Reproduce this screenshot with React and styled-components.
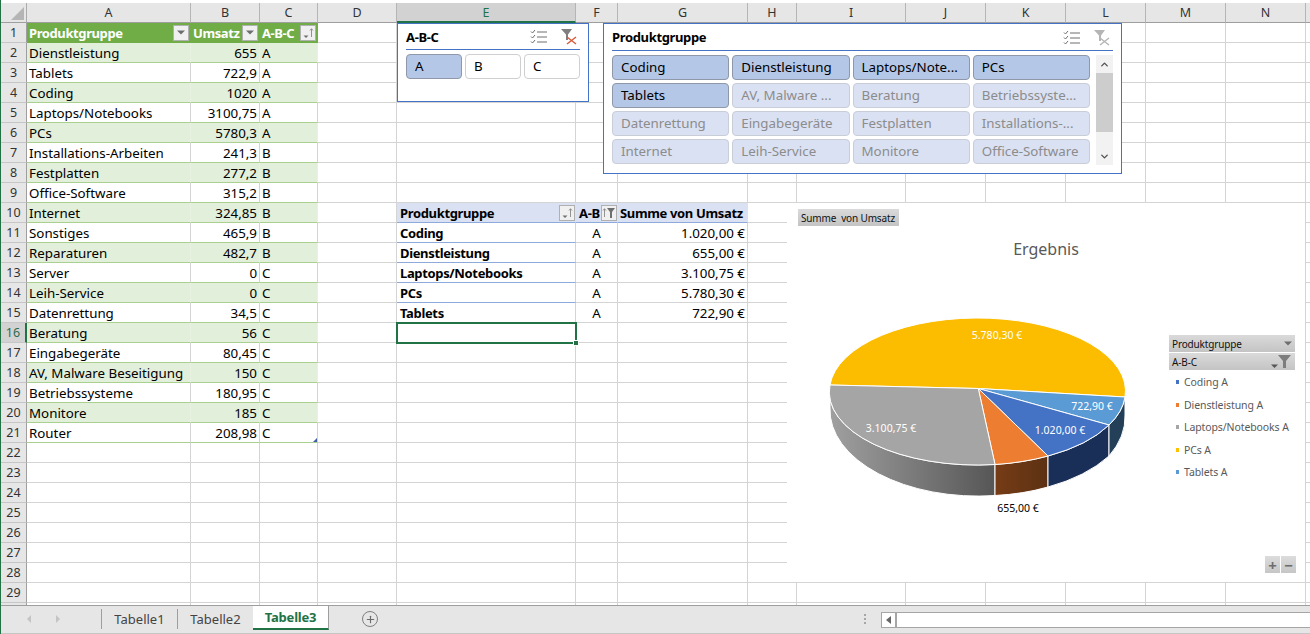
import React from "react";
import styled, { createGlobalStyle } from "styled-components";
import { ChevronUp, ChevronDown, Plus } from "lucide-react";

const GlobalStyle = createGlobalStyle`
  html, body { margin: 0; padding: 0; background: #fff; }
  body { font-family: "Noto Sans", "Open Sans", sans-serif; font-size: 13.33px; color: #000; }
  * { box-sizing: border-box; }
`;

const FONT = `"Noto Sans", "Open Sans", sans-serif`;
const GRID = "#d4d4d4";
const GREEN = "#217346";

const columns = [
  ["A", 164], ["B", 69], ["C", 58], ["D", 79], ["E", 179], ["F", 42], ["G", 130], ["H", 49],
  ["I", 109], ["J", 80], ["K", 80], ["L", 80], ["M", 80], ["N", 80], ["", 20],
];

const products = [
  ["Dienstleistung", "655", "A"], ["Tablets", "722,9", "A"], ["Coding", "1020", "A"],
  ["Laptops/Notebooks", "3100,75", "A"], ["PCs", "5780,3", "A"], ["Installations-Arbeiten", "241,3", "B"],
  ["Festplatten", "277,2", "B"], ["Office-Software", "315,2", "B"], ["Internet", "324,85", "B"],
  ["Sonstiges", "465,9", "B"], ["Reparaturen", "482,7", "B"], ["Server", "0", "C"],
  ["Leih-Service", "0", "C"], ["Datenrettung", "34,5", "C"], ["Beratung", "56", "C"],
  ["Eingabegeräte", "80,45", "C"], ["AV, Malware Beseitigung", "150", "C"], ["Betriebssysteme", "180,95", "C"],
  ["Monitore", "185", "C"], ["Router", "208,98", "C"],
];

const pivot = [
  ["Coding", "A", "1.020,00 €"], ["Dienstleistung", "A", "655,00 €"], ["Laptops/Notebooks", "A", "3.100,75 €"],
  ["PCs", "A", "5.780,30 €"], ["Tablets", "A", "722,90 €"],
];

const slicerItems = [
  ["Coding", 1], ["Dienstleistung", 1], ["Laptops/Note...", 1], ["PCs", 1],
  ["Tablets", 1], ["AV, Malware ...", 0], ["Beratung", 0], ["Betriebssyste...", 0],
  ["Datenrettung", 0], ["Eingabegeräte", 0], ["Festplatten", 0], ["Installations-...", 0],
  ["Internet", 0], ["Leih-Service", 0], ["Monitore", 0], ["Office-Software", 0],
];

const legend = [
  ["Coding A", "#4472c4"], ["Dienstleistung A", "#ed7d31"], ["Laptops/Notebooks A", "#a5a5a5"],
  ["PCs A", "#ffc000"], ["Tablets A", "#5b9bd5"],
];

const Workbook = styled.div`
  width: 1310px;
  height: 634px;
  overflow: hidden;
  padding-top: 3px;
  border-left: 1px solid ${GREEN};
  display: flex;
  flex-direction: column;
`;

const Sheet = styled.div`
  position: relative;
  height: 602px;
  overflow: hidden;
  display: grid;
  grid-template-columns: 26px ${columns.map((c) => c[1] + "px").join(" ")};
  grid-auto-rows: 20px;
`;

const Corner = styled.div`
  background: #e6e6e6;
  border-right: 1px solid #ababab;
  border-bottom: 1px solid #9e9e9e;
  display: flex;
  align-items: flex-end;
  justify-content: flex-end;
  padding: 0 2px 2px 0;
  &::after {
    content: "";
    border-style: solid;
    border-width: 0 0 13px 13px;
    border-color: transparent transparent #b5b5b5 transparent;
  }
`;

const ColHead = styled.div`
  background: ${(p) => (p.$active ? "#d2d2d2" : "#e6e6e6")};
  color: ${(p) => (p.$active ? GREEN : "#333")};
  border-right: 1px solid #b5b5b5;
  border-bottom: ${(p) => (p.$active ? `2px solid ${GREEN}` : "1px solid #9e9e9e")};
  font-size: 12.5px;
  display: flex;
  align-items: center;
  justify-content: center;
`;

const RowHead = styled.div`
  background: ${(p) => (p.$active ? "#d2d2d2" : "#e6e6e6")};
  color: ${(p) => (p.$active ? "#2f6b4d" : "#333")};
  border-right: ${(p) => (p.$active ? `2px solid ${GREEN}` : "1px solid #9e9e9e")};
  border-bottom: 1px solid #c6c6c6;
  font-size: 12.5px;
  display: flex;
  align-items: center;
  justify-content: center;
`;

const Cell = styled.div`
  position: relative;
  border-right: 1px solid ${GRID};
  border-bottom: 1px solid ${GRID};
  padding: 0 2px;
  font-size: 13.33px;
  white-space: nowrap;
  overflow: hidden;
  display: flex;
  align-items: center;
  justify-content: ${(p) => (p.$align === "right" ? "flex-end" : p.$align === "center" ? "center" : "flex-start")};
`;

const TableCell = styled(Cell)`
  background: ${(p) => (p.$band ? "#e2efda" : "#fff")};
  border-bottom-color: #a9d08e;
  border-right-color: ${(p) => (p.$band ? "#e8f2e1" : GRID)};
  overflow: visible;
`;

const TableHead = styled(Cell)`
  background: #70ad47;
  color: #fff;
  font-size: 13px;
  font-weight: 700;
  letter-spacing: -0.4px;
  border-right-color: #70ad47;
  border-bottom-color: #70ad47;
  padding: 0 1px 0 2px;
  gap: 2px;
  justify-content: space-between;
`;

const PivotHead = styled(Cell)`
  background: #d9e1f2;
  font-size: 13px;
  font-weight: 700;
  letter-spacing: -0.35px;
  border-right-color: #d9e1f2;
  border-bottom-color: #8ea9db;
  justify-content: space-between;
  padding: 0 0 0 ${(p) => p.$indent}px;
`;

const PivotLabel = styled(Cell)`
  font-size: 13px;
  font-weight: 700;
  letter-spacing: -0.35px;
  padding-left: 3px;
  border-bottom-color: #8ea9db;
`;

const ActiveCell = styled(Cell)`
  overflow: visible;
  border: none;
  outline: 2px solid ${GREEN};
  outline-offset: -1px;
  z-index: 2;
`;

const FillHandle = styled.span`
  position: absolute;
  right: -3px;
  bottom: -3px;
  width: 6px;
  height: 6px;
  background: ${GREEN};
  border: 1px solid #fff;
`;

const ResizeHandle = styled.span`
  position: absolute;
  right: 0;
  bottom: 0;
  border-style: solid;
  border-width: 0 0 4px 4px;
  border-color: transparent transparent #3f5ea8 transparent;
`;

const DropButton = styled.span`
  width: 16px;
  height: 16px;
  flex: none;
  background: #f0f0f0;
  border: 1px solid #b0b0b0;
  display: flex;
  align-items: center;
  justify-content: center;
`;

const Slicer = styled.div`
  position: absolute;
  z-index: 3;
  top: ${(p) => p.$top}px;
  left: ${(p) => p.$left}px;
  width: ${(p) => p.$width}px;
  height: ${(p) => p.$height}px;
  background: #fff;
  border: 1px solid #4472c4;
  padding: 0 8px;
`;

const SlicerHeader = styled.div`
  height: ${(p) => p.$height}px;
  border-bottom: 1px solid #4472c4;
  display: flex;
  align-items: center;
  font-weight: 700;
  font-size: 13px;
  letter-spacing: -0.35px;
`;

const SlicerTitle = styled.span`
  flex: 1;
`;

const SlicerIcons = styled.div`
  display: flex;
  align-items: center;
  gap: 14px;
  margin-right: 3px;
`;

const ButtonGrid = styled.div`
  display: grid;
  grid-template-columns: repeat(${(p) => p.$cols}, 1fr);
  grid-auto-rows: 25px;
  gap: 3px;
  flex: 1;
`;

const SlicerBody = styled.div`
  display: flex;
  gap: 6px;
  margin-top: 4px;
`;

const SliceButton = styled.div`
  border-radius: 4px;
  padding: 0 8px 1px;
  font-size: 13.33px;
  display: flex;
  align-items: center;
  white-space: nowrap;
  overflow: hidden;
  background: ${(p) => (p.$state === "on" ? "#b4c7e7" : p.$state === "off" ? "#dae1f3" : "#fff")};
  border: 1px solid ${(p) => (p.$state === "on" ? "#8f98a8" : p.$state === "off" ? "#c8cdd8" : "#cfcfcf")};
  color: ${(p) => (p.$state === "off" ? "#8c8c8c" : "#000")};
`;

const ScrollBar = styled.div`
  width: 17px;
  height: 110px;
  background: #f2f2f2;
  display: flex;
  flex-direction: column;
  align-items: center;
  color: #505050;
`;

const ScrollThumb = styled.div`
  width: 17px;
  height: 59px;
  background: #cdcdcd;
  margin-bottom: auto;
`;

const ScrollArrow = styled.div`
  height: 18px;
  display: flex;
  align-items: center;
`;

const Chart = styled.div`
  position: absolute;
  z-index: 1;
  top: 200px;
  left: 786px;
  width: 518px;
  height: 379px;
  background: #fff;
  display: flex;
  flex-direction: column;
`;

const FieldButton = styled.div`
  background: linear-gradient(#dadada, #c4c4c4);
  color: #111;
  font-size: 10px;
  letter-spacing: -0.15px;
  height: 17px;
  display: flex;
  align-items: center;
  justify-content: space-between;
  padding: 0 3px;
  white-space: pre;
`;

const MeasureButton = styled(FieldButton)`
  align-self: flex-start;
  width: 101px;
  margin: 6px 0 0 11px;
`;

const ChartTitle = styled.div`
  margin-top: 10px;
  height: 26px;
  line-height: 26px;
  text-align: center;
  font-size: 16px;
  color: #595959;
`;

const ChartBody = styled.div`
  flex: 1;
  display: flex;
`;

const LegendColumn = styled.div`
  width: 127px;
  padding: 73px 0 9px;
  display: flex;
  flex-direction: column;
`;

const LegendFields = styled.div`
  display: flex;
  flex-direction: column;
  gap: 1px;
  margin: 0 1px 1px 0;
`;

const LegendItem = styled.div`
  height: 22.5px;
  padding-left: 7px;
  display: flex;
  align-items: center;
  gap: 5px;
  font-size: 10.5px;
  letter-spacing: -0.1px;
  color: #595959;
  white-space: nowrap;
`;

const LegendSwatch = styled.span`
  width: 3px;
  height: 4px;
  background: ${(p) => p.$color};
`;

const ZoomButtons = styled.div`
  margin-top: auto;
  display: flex;
  justify-content: flex-end;
  gap: 1px;
`;

const ZoomButton = styled.div`
  width: 15px;
  height: 17px;
  background: linear-gradient(#dcdcdc, #c6c6c6);
  color: #6e6e6e;
  font-size: 15px;
  font-weight: 700;
  display: flex;
  align-items: center;
  justify-content: center;
`;

const BottomBar = styled.div`
  flex: 1;
  background: #e6e6e6;
  border-top: 1px solid #9e9e9e;
  border-bottom: 1px solid #c6c6c6;
  display: flex;
  align-items: flex-start;
`;

const NavArrows = styled.div`
  width: 100px;
  height: 26px;
  display: flex;
  align-items: center;
  padding-left: 26px;
  gap: 25px;
`;

const NavArrow = styled.span`
  border-style: solid;
  border-width: 4px 0 4px 4px;
  border-color: transparent transparent transparent #c4c4c4;
  transform: ${(p) => (p.$left ? "scaleX(-1)" : "none")};
`;

const SheetTab = styled.div`
  width: 76px;
  height: ${(p) => (p.$active ? 24 : 20)}px;
  margin-top: ${(p) => (p.$active ? 0 : 3)}px;
  display: flex;
  align-items: center;
  justify-content: center;
  font-size: 13px;
  background: ${(p) => (p.$active ? "#fff" : "transparent")};
  color: ${(p) => (p.$active ? GREEN : "#444")};
  font-weight: ${(p) => (p.$active ? 700 : 400)};
  letter-spacing: ${(p) => (p.$active ? "-0.2px" : "0")};
  border-left: ${(p) => (p.$active ? "none" : "1px solid #9e9e9e")};
  border-bottom: ${(p) => (p.$active ? `2px solid ${GREEN}` : "none")};
  border-right: ${(p) => (p.$active ? "1px solid #9e9e9e" : "none")};
`;

const AddSheet = styled.div`
  width: 16px;
  height: 16px;
  margin: 5px 0 0 33px;
  border: 1px solid #7f7f7f;
  border-radius: 50%;
  color: #6a6a6a;
  display: flex;
  align-items: center;
  justify-content: center;
`;

const SplitDots = styled.div`
  margin: 8px 15px 0 auto;
  display: flex;
  flex-direction: column;
  gap: 2px;
  & > span {
    width: 2px;
    height: 2px;
    background: #a6a6a6;
  }
`;

const HScroll = styled.div`
  width: 429px;
  height: 16px;
  margin-top: 6px;
  background: #fff;
  border: 1px solid #a6a6a6;
  border-right: none;
  display: flex;
`;

const HScrollButton = styled.div`
  width: 15px;
  border-right: 2px solid #a6a6a6;
  display: flex;
  align-items: center;
  justify-content: center;
  &::after {
    content: "";
    border-style: solid;
    border-width: 4px 5px 4px 0;
    border-color: transparent #666 transparent transparent;
  }
`;

const Caret = () => (
  <svg width="8" height="5" viewBox="0 0 8 5">
    <path d="M0 0.5h8L4 4.5z" fill="#6e6e6e" />
  </svg>
);

const SortMark = () => (
  <svg width="14" height="12" viewBox="0 0 14 12">
    <path d="M2.5 8.5h5L5 11z" fill="#6e6e6e" />
    <path d="M10.5 10V2M9 3.5l1.5-1.8L12 3.5" fill="none" stroke="#7a7a7a" strokeWidth="0.8" />
  </svg>
);

const FilterMark = () => (
  <svg width="14" height="12" viewBox="0 0 14 12">
    <path d="M2.5 10V2M1 3.5l1.5-1.8L4 3.5" fill="none" stroke="#7a7a7a" strokeWidth="0.8" />
    <path d="M5 1h8L10 5v6H8V5z" fill="#6e6e6e" />
  </svg>
);

const LegendFilter = () => (
  <svg width="21" height="15" viewBox="0 0 21 15">
    <path d="M0 10.5h7L3.5 14z" fill="#555" />
    <path d="M7 1h13l-5 6v7h-3V7z" fill="#7d7d7d" />
  </svg>
);

const ChecklistIcon = () => (
  <svg width="17" height="15" viewBox="0 0 17 15">
    <g fill="none" stroke="#6e6e6e" strokeWidth="1">
      <path d="M1 2.5l1.5 1.5L5 1M1 7.5L2.5 9 5 6M1 12.5L2.5 14 5 11" />
      <path d="M7 3h10M7 8h10M7 13h10" />
    </g>
  </svg>
);

const ClearFilterIcon = ({ disabled }) => (
  <svg width="16" height="17" viewBox="0 0 16 17">
    <path d="M0 1h11L7 6.5V12H5V6.5z" fill={disabled ? "#b5b5b5" : "#7f7f7f"} />
    <path d="M6 9l9 7M15 9l-9 7" stroke={disabled ? "#b5b5b5" : "#d9593a"} strokeWidth="1.4" fill="none" />
  </svg>
);

const SlicerHead = ({ title, height }) => (
  <SlicerHeader $height={height}>
    <SlicerTitle>{title}</SlicerTitle>
    <SlicerIcons>
      <ChecklistIcon />
      <ClearFilterIcon disabled={title !== "A-B-C"} />
    </SlicerIcons>
  </SlicerHeader>
);

const PieChart = () => (
  <svg width="382" height="320" viewBox="787 262 382 320">
    <defs>
      <linearGradient id="graySide" x1="0" x2="1" y1="0" y2="0">
        <stop offset="0" stopColor="#a0a0a0" />
        <stop offset="1" stopColor="#565656" />
      </linearGradient>
      <linearGradient id="orangeSide" x1="0" x2="1" y1="0" y2="0">
        <stop offset="0" stopColor="#763c16" />
        <stop offset="1" stopColor="#5c3113" />
      </linearGradient>
    </defs>
    <g stroke="#fff" strokeWidth="1" strokeLinejoin="round">
      <path d="M830 385A148 73 0 0 0 995 464.5V495.5A148 86 0 0 1 830 408Z" fill="url(#graySide)" />
      <path d="M995 464.5A148 73 0 0 0 1048 456V487A148 86 0 0 1 995 495.5Z" fill="url(#orangeSide)" />
      <path d="M1048 456A148 73 0 0 0 1109 425V456A148 86 0 0 1 1048 487Z" fill="#1a2f57" />
      <path d="M1109 425A148 73 0 0 0 1125 397V415A148 86 0 0 1 1109 456Z" fill="#234058" />
      <path d="M978.3 388.5L830 385A148 73 0 0 1 1125 397Z" fill="#fcbc00" />
      <path d="M978.3 388.5L1125 397A148 73 0 0 1 1109 425Z" fill="#5b9bd5" />
      <path d="M978.3 388.5L1109 425A148 73 0 0 1 1048 456Z" fill="#4472c4" />
      <path d="M978.3 388.5L1048 456A148 73 0 0 1 995 464.5Z" fill="#ed7d31" />
      <path d="M978.3 388.5L995 464.5A148 73 0 0 1 830 385Z" fill="#a5a5a5" />
    </g>
    <g fontFamily={FONT} fontSize="10.5" textAnchor="middle" fill="#fff">
      <text x="997" y="339">5.780,30 €</text>
      <text x="1092" y="410">722,90 €</text>
      <text x="1060" y="434">1.020,00 €</text>
      <text x="891" y="432">3.100,75 €</text>
      <text x="1018" y="512" fill="#000">655,00 €</text>
    </g>
  </svg>
);

const blanks = (from, row) =>
  columns.slice(from).map((c, i) => <Cell key={i + "-" + row} />);

const SheetRow = ({ row }) => {
  const item = products[row - 2];
  const band = row % 2 === 0;
  const plain = row > 21;
  const pivotItem = pivot[row - 11];

  return (
    <>
      <RowHead $active={row === 16}>{row < 30 ? row : ""}</RowHead>
      {row === 1 ? (
        <>
          <TableHead>Produktgruppe<DropButton><Caret /></DropButton></TableHead>
          <TableHead>Umsatz<DropButton><Caret /></DropButton></TableHead>
          <TableHead>A-B-C<DropButton><SortMark /></DropButton></TableHead>
        </>
      ) : plain ? (
        <>
          <Cell />
          <Cell />
          <Cell />
        </>
      ) : (
        <>
          <TableCell $band={band}>{item[0]}</TableCell>
          <TableCell $band={band} $align="right">{item[1]}</TableCell>
          <TableCell $band={band}>
            {item[2]}
            {row === 21 && <ResizeHandle />}
          </TableCell>
        </>
      )}
      <Cell />
      {row === 10 ? (
        <>
          <PivotHead $indent={3}>Produktgruppe<DropButton><SortMark /></DropButton></PivotHead>
          <PivotHead $indent={3}>A-B<DropButton><FilterMark /></DropButton></PivotHead>
          <PivotHead $indent={2}>Summe von Umsatz</PivotHead>
        </>
      ) : pivotItem ? (
        <>
          <PivotLabel>{pivotItem[0]}</PivotLabel>
          <Cell $align="center">{pivotItem[1]}</Cell>
          <Cell $align="right">{pivotItem[2]}</Cell>
        </>
      ) : (
        <>
          {row === 16 ? <ActiveCell><FillHandle /></ActiveCell> : <Cell />}
          <Cell />
          <Cell />
        </>
      )}
      {blanks(7, row)}
    </>
  );
};

export default function App() {
  const rows = Array.from({ length: 30 }, (_, i) => i + 1);

  return (
    <>
      <GlobalStyle />
      <Workbook>
        <Sheet>
          <Corner />
          {columns.map((c, i) => (
            <ColHead key={i} $active={c[0] === "E"}>{c[0]}</ColHead>
          ))}
          {rows.map((r) => (
            <SheetRow key={r} row={r} />
          ))}

          <Slicer $top={20} $left={396} $width={192} $height={79}>
            <SlicerHead title="A-B-C" height={26} />
            <SlicerBody>
              <ButtonGrid $cols={3}>
                <SliceButton $state="on">A</SliceButton>
                <SliceButton>B</SliceButton>
                <SliceButton>C</SliceButton>
              </ButtonGrid>
            </SlicerBody>
          </Slicer>

          <Slicer $top={20} $left={602} $width={519} $height={151}>
            <SlicerHead title="Produktgruppe" height={27} />
            <SlicerBody>
              <ButtonGrid $cols={4}>
                {slicerItems.map(([label, on]) => (
                  <SliceButton key={label} $state={on ? "on" : "off"}>{label}</SliceButton>
                ))}
              </ButtonGrid>
              <ScrollBar>
                <ScrollArrow><ChevronUp size={11} strokeWidth={3} /></ScrollArrow>
                <ScrollThumb />
                <ScrollArrow><ChevronDown size={11} strokeWidth={3} /></ScrollArrow>
              </ScrollBar>
            </SlicerBody>
          </Slicer>

          <Chart>
            <MeasureButton>Summe  von Umsatz</MeasureButton>
            <ChartTitle>Ergebnis</ChartTitle>
            <ChartBody>
              <PieChart />
              <LegendColumn>
                <LegendFields>
                  <FieldButton>Produktgruppe<Caret /></FieldButton>
                  <FieldButton>A-B-C<LegendFilter /></FieldButton>
                </LegendFields>
                {legend.map(([label, color]) => (
                  <LegendItem key={label}>
                    <LegendSwatch $color={color} />
                    {label}
                  </LegendItem>
                ))}
                <ZoomButtons>
                  <ZoomButton>+</ZoomButton>
                  <ZoomButton>−</ZoomButton>
                </ZoomButtons>
              </LegendColumn>
            </ChartBody>
          </Chart>
        </Sheet>

        <BottomBar>
          <NavArrows>
            <NavArrow $left />
            <NavArrow />
          </NavArrows>
          <SheetTab>Tabelle1</SheetTab>
          <SheetTab>Tabelle2</SheetTab>
          <SheetTab $active>Tabelle3</SheetTab>
          <AddSheet><Plus size={11} strokeWidth={2.5} /></AddSheet>
          <SplitDots><span /><span /><span /></SplitDots>
          <HScroll><HScrollButton /></HScroll>
        </BottomBar>
      </Workbook>
    </>
  );
}
